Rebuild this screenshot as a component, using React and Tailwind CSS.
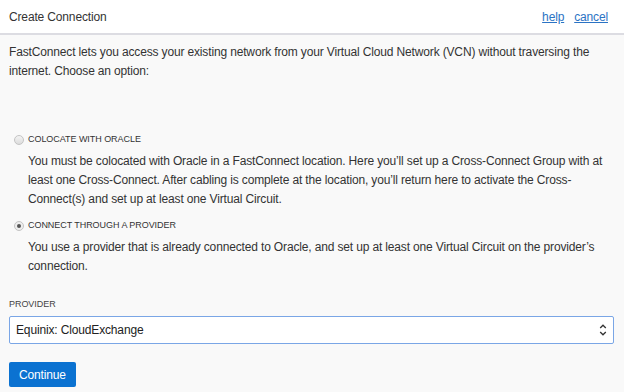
export default function App() {
  return (
    <div className="w-[624px] h-[392px] overflow-hidden bg-[#f9f9f9] text-[#333] font-['Liberation_Sans',Arial,sans-serif] tracking-[-0.15px]">
      <div className="h-[35px] bg-white border-b-2 border-[#dcdce2] flex items-center justify-between pl-[9px] pr-[16px]">
        <div className="text-[12px] text-[#333]">Create Connection</div>
        <div className="flex gap-[10px] text-[12px]">
          <a className="text-[#2b73c4] underline" href="#">help</a>
          <a className="text-[#2b73c4] underline" href="#">cancel</a>
        </div>
      </div>
      <div className="px-[9px] pt-[8px]">
        <p className="text-[12px] leading-[19px]">
          FastConnect lets you access your existing network from your Virtual Cloud Network (VCN) without traversing the internet. Choose an option:
        </p>
        <div className="mt-[52px] h-[14px] flex items-center gap-[4px] pl-[5px]">
          <span className="w-[10px] h-[10px] rounded-full border border-[#c4c4c4] bg-gradient-to-b from-[#f4f4f4] to-[#dcdcdc]"></span>
          <span className="text-[9px] tracking-[-0.05px] text-[#333]">COLOCATE WITH ORACLE</span>
        </div>
        <p className="mt-[5px] pl-[19px] pr-[2px] text-[12px] leading-[19px]">
          You must be colocated with Oracle in a FastConnect location. Here you’ll set up a Cross-Connect Group with at least one Cross-Connect. After cabling is complete at the location, you’ll return here to activate the Cross-Connect(s) and set up at least one Virtual Circuit.
        </p>
        <div className="mt-[10px] h-[14px] flex items-center gap-[4px] pl-[5px]">
          <span className="w-[10px] h-[10px] rounded-full border border-[#c4c4c4] bg-[#eeeeee] flex items-center justify-center">
            <span className="w-[4px] h-[4px] rounded-full bg-[#555]"></span>
          </span>
          <span className="text-[9px] tracking-[-0.05px] text-[#333]">CONNECT THROUGH A PROVIDER</span>
        </div>
        <p className="mt-[5px] pl-[19px] pr-[2px] text-[12px] leading-[19px]">
          You use a provider that is already connected to Oracle, and set up at least one Virtual Circuit on the provider’s connection.
        </p>
        <div className="mt-[22px] h-[12px] leading-[12px] text-[9px] tracking-[-0.05px] text-[#444]">PROVIDER</div>
        <div className="mt-[6px] h-[28px] w-[605px] bg-white border border-[#7aa6e6] rounded-[2px] flex items-center justify-between pl-[6px] pr-[6px]">
          <span className="text-[12px] text-[#222]">Equinix: CloudExchange</span>
          <svg width="8" height="14" viewBox="0 0 8 14" fill="none" stroke="#333" strokeWidth="1.3">
            <path d="M1.2 5 L4 2.2 L6.8 5" />
            <path d="M1.2 9 L4 11.8 L6.8 9" />
          </svg>
        </div>
        <button className="mt-[18px] h-[25px] px-[10px] rounded-[2px] bg-[#0b72d1] text-white text-[12px] block">Continue</button>
      </div>
    </div>
  );
}
